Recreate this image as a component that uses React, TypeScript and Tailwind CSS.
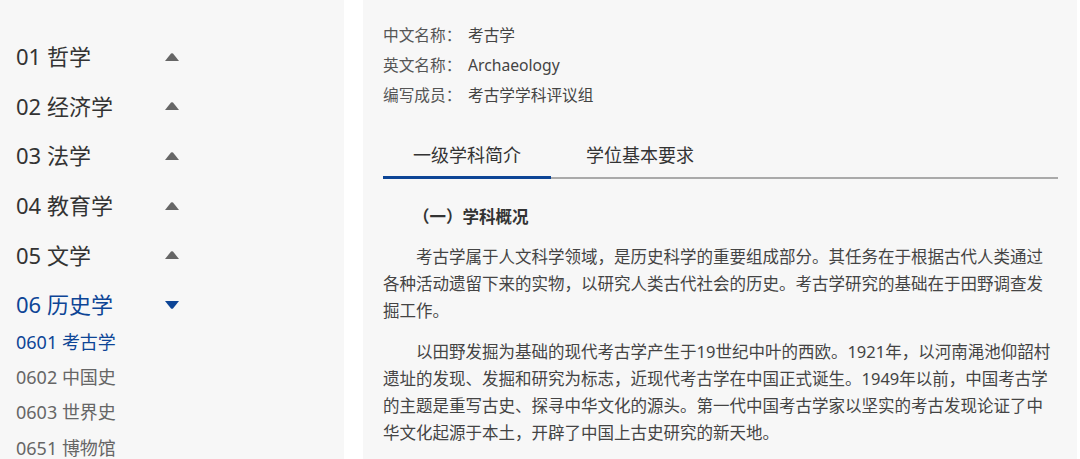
import React from "react";

const font = { fontFamily: '"Noto Sans", "Noto Sans CJK SC", sans-serif' };

const majors = [
  { code: "01", name: "哲学" },
  { code: "02", name: "经济学" },
  { code: "03", name: "法学" },
  { code: "04", name: "教育学" },
  { code: "05", name: "文学" },
];

const subs = [
  { code: "0601", name: "考古学", active: true },
  { code: "0602", name: "中国史" },
  { code: "0603", name: "世界史" },
  { code: "0651", name: "博物馆" },
];

function Caret({ open }: { open?: boolean }) {
  return (
    <svg width="14" height="8" viewBox="0 0 14 8" className="shrink-0">
      {open ? (
        <path d="M0 0 H14 L8 7.4 Q7 8.2 6 7.4 Z" fill="#0d4596" />
      ) : (
        <path d="M0 8 H14 L8 0.6 Q7 -0.2 6 0.6 Z" fill="#666" />
      )}
    </svg>
  );
}

function Sidebar() {
  return (
    <aside className="w-[344px] shrink-0 bg-[#f7f7f7] pt-[32px]">
      {majors.map((m) => (
        <div key={m.code} className="flex h-[49.6px] items-center pl-[16px]">
          <span className="w-[149px] text-[22px] text-[#333]">
            {m.code} {m.name}
          </span>
          <Caret />
        </div>
      ))}
      <div className="flex h-[49.6px] items-center pl-[16px]">
        <span className="w-[149px] text-[22px] text-[#0d4596]">06 历史学</span>
        <Caret open />
      </div>
      <div className="-mt-[5px]">
        {subs.map((s) => (
          <div
            key={s.code}
            className={`flex h-[35.3px] items-center pl-[16px] text-[18px] ${s.active ? "text-[#0d4596]" : "text-[#666]"}`}
          >
            {s.code} {s.name}
          </div>
        ))}
      </div>
    </aside>
  );
}

function Info({ label, value }: { label: string; value: string }) {
  return (
    <div className="flex h-[30px] items-center text-[15.7px] text-[#444]">
      <span className="w-[85px] shrink-0 text-[#555]">{label}</span>
      <span>{value}</span>
    </div>
  );
}

export default function App() {
  return (
    <div className="flex h-[459px] w-[1080px] overflow-hidden bg-white" style={font}>
      <Sidebar />
      <main className="ml-[19px] w-[714px] bg-[#f7f7f7] pl-[20px] pt-[21px]">
        <Info label="中文名称：" value="考古学" />
        <Info label="英文名称：" value="Archaeology" />
        <Info label="编写成员：" value="考古学学科评议组" />

        <div className="mt-[24px] flex w-[675px] border-b-[2px] border-[#aaa]">
          <div className="-mb-[2px] flex h-[44px] w-[168px] items-center justify-center border-b-[3px] border-[#0d4596] text-[18px] text-[#333]">
            一级学科简介
          </div>
          <div className="-mb-[2px] flex h-[44px] w-[178px] items-center justify-center border-b-[3px] border-transparent text-[18px] text-[#333]">
            学位基本要求
          </div>
        </div>

        <div className="w-[675px] text-[16.5px] leading-[27px] text-[#444]">
          <h3 className="mt-[24px] pl-[30px] font-bold text-[#333]">（一）学科概况</h3>
          <p className="mt-[13px] indent-[2em]">
            考古学属于人文科学领域，是历史科学的重要组成部分。其任务在于根据古代人类通过各种活动遗留下来的实物，以研究人类古代社会的历史。考古学研究的基础在于田野调查发掘工作。
          </p>
          <p className="mt-[14px] indent-[2em]">
            以田野发掘为基础的现代考古学产生于19世纪中叶的西欧。1921年，以河南渑池仰韶村遗址的发现、发掘和研究为标志，近现代考古学在中国正式诞生。1949年以前，中国考古学的主题是重写古史、探寻中华文化的源头。第一代中国考古学家以坚实的考古发现论证了中华文化起源于本土，开辟了中国上古史研究的新天地。
          </p>
        </div>
      </main>
    </div>
  );
}
